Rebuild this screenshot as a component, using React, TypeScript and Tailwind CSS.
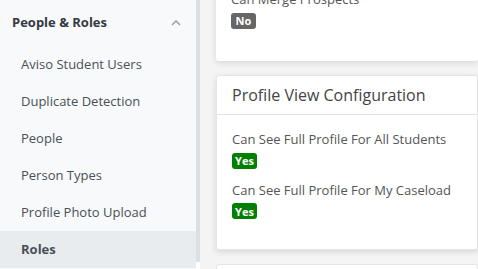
import React from 'react';

const items = ['Aviso Student Users', 'Duplicate Detection', 'People', 'Person Types', 'Profile Photo Upload', 'Roles'];

const Badge = ({ yes }: { yes: boolean }) => (
  <span
    className={`inline-flex items-center justify-center h-4 w-[25px] rounded-[3px] text-[11px] font-bold text-white leading-none ${
      yes ? 'bg-[#008000]' : 'bg-[#666666]'
    }`}
  >
    {yes ? 'Yes' : 'No'}
  </span>
);

const App: React.FC = () => {
  return (
    <div className="w-[478px] h-[269px] overflow-hidden flex bg-[#f4f4f4] font-['Open_Sans',sans-serif]">
      <div className="w-[196px] shrink-0 bg-[#f8f9fa] flex flex-col">
        <div className="h-[46px] flex items-center justify-between pl-3 pr-3">
          <span className="text-[13px] font-bold text-[#343a40]">People &amp; Roles</span>
          <svg width="10" height="6" viewBox="0 0 10 6" className="mr-[3px]">
            <path d="M1 5 L5 1 L9 5" fill="none" stroke="#999" strokeWidth="1.4" />
          </svg>
        </div>
        {items.map((it) => (
          <div
            key={it}
            className={`h-[37px] shrink-0 flex items-center pl-[21px] text-[13px] text-[#495057] ${
              it === 'Roles' ? 'bg-[#e9ecef] font-bold text-[#343a40]' : ''
            }`}
          >
            {it}
          </div>
        ))}
      </div>
      <div className="w-1 shrink-0 flex flex-col">
        <div className="h-[262px] bg-[#dcdfe3]" />
        <div className="flex-1 bg-white" />
      </div>
      <div className="flex-1 pl-4 flex flex-col gap-[14px] mt-[-12px]">
        <div className="shrink-0 bg-white rounded-[3px] shadow-[0_2px_6px_rgba(0,0,0,0.12)] h-[73px] px-[15px] pt-[2px]">
          <div className="text-[13px] text-[#555]">Can Merge Prospects</div>
          <div className="mt-[3px] flex"><Badge yes={false} /></div>
        </div>
        <div className="shrink-0 bg-white rounded-[3px] shadow-[0_2px_6px_rgba(0,0,0,0.12)] border border-[#e5e5e5] h-[175px]">
          <div className="h-[39px] flex items-center px-[15px] border-b border-[#e2e2e2]">
            <span className="text-[16px] font-medium text-[#444]">Profile View Configuration</span>
          </div>
          <div className="px-[15px] pt-[15px]">
            <div className="text-[13px] text-[#555]">Can See Full Profile For All Students</div>
            <div className="mt-[3px] flex"><Badge yes /></div>
            <div className="text-[13px] text-[#555] mt-[12px]">Can See Full Profile For My Caseload</div>
            <div className="mt-[3px] flex"><Badge yes /></div>
          </div>
        </div>
        <div className="shrink-0 bg-white rounded-[3px] border border-[#e5e5e5] h-[60px]" />
      </div>
    </div>
  );
};

export default App;
